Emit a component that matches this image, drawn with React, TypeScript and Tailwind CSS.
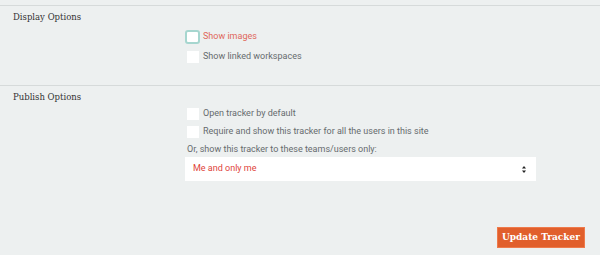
const slab = { fontFamily: '"DejaVu Serif", "Liberation Serif", serif' };

function Check({ focused = false }: { focused?: boolean }) {
  return focused ? (
    <span className="w-[15px] h-[14px] rounded-[3px] border-2 border-[#a6d6cf] bg-white shrink-0" />
  ) : (
    <span className="w-[12px] h-[12px] ml-[2px] mr-[1px] bg-white shrink-0" />
  );
}

function Option({ label, red = false, focused = false }: { label: string; red?: boolean; focused?: boolean }) {
  return (
    <label className="flex items-center gap-[3px] h-[18px]">
      <Check focused={focused} />
      <span className={red ? "text-[#e0675a]" : "text-[#666b6e]"}>{label}</span>
    </label>
  );
}

export default function App() {
  return (
    <div
      className="w-[600px] h-[255px] bg-[#edf0f0] text-[9px] overflow-hidden"
      style={{ fontFamily: 'Roboto, "Liberation Sans", sans-serif' }}
    >
      <div className="pt-[5px]">
        <div className="border-t border-[#d6dada] h-[80px]">
          <div className="pl-[13px] pt-[5px] leading-[13px] text-[8.5px] text-[#333] font-medium" style={slab}>
            Display Options
          </div>
          <div className="ml-[185px] mt-[4px] flex flex-col gap-[2px]">
            <Option label="Show images" red focused />
            <Option label="Show linked workspaces" />
          </div>
        </div>
        <div className="border-t border-[#d6dada]">
          <div className="pl-[13px] pt-[5px] leading-[13px] text-[8.5px] text-[#333] font-medium" style={slab}>
            Publish Options
          </div>
          <div className="ml-[185px] mt-[1px] flex flex-col w-[351px]">
            <Option label="Open tracker by default" />
            <Option label="Require and show this tracker for all the users in this site" />
            <div className="text-[#666b6e] pl-[2px] pt-[1px] h-[16px] flex items-center">
              Or, show this tracker to these teams/users only:
            </div>
            <div className="h-[24px] bg-white flex items-center justify-between pl-[8px] pr-[10px]">
              <span className="text-[#e0443a]">Me and only me</span>
              <svg width="4" height="7" viewBox="0 0 4 7">
                <path d="M0 2.6 L2 0 L4 2.6 Z" fill="#222" />
                <path d="M0 4.4 L2 7 L4 4.4 Z" fill="#222" />
              </svg>
            </div>
          </div>
          <div className="flex justify-end pr-[15px] mt-[46px]">
            <button
              className="h-[21px] px-[4px] bg-[#e15f2c] border border-[#ee7a4b] text-white font-bold text-[9px]"
              style={slab}
            >
              Update Tracker
            </button>
          </div>
        </div>
      </div>
    </div>
  );
}
